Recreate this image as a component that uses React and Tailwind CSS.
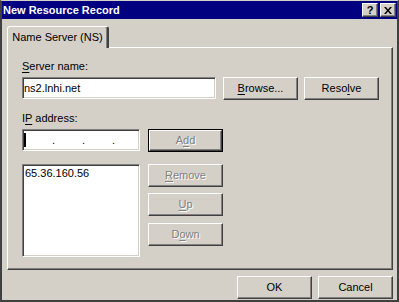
import clsx from "clsx";

const raised =
  "border border-t-white border-l-white border-r-[#404040] border-b-[#404040] shadow-[inset_-1px_-1px_0_#808080] bg-[#d4d0c8]";
const sunken =
  "border border-t-[#808080] border-l-[#808080] border-r-white border-b-white shadow-[inset_1px_1px_0_#404040,inset_-1px_-1px_0_#d4d0c8] bg-white";

const Key = ({ children }) => <span className="underline underline-offset-[2px]">{children}</span>;

const Btn = ({ children, disabled, isDefault, className }) => {
  const face = (
    <div
      className={clsx(
        "flex h-full w-full items-center justify-center",
        raised,
        disabled ? "text-[#808080] [text-shadow:1px_1px_0_#ffffff]" : "text-black"
      )}
    >
      {children}
    </div>
  );
  return (
    <button type="button" className={clsx("shrink-0", isDefault && "border border-black", className)}>
      {face}
    </button>
  );
};

const TitleButton = ({ children }) => (
  <div className={clsx("flex h-[14px] w-[16px] items-center justify-center", raised)}>{children}</div>
);

const App = () => {
  return (
    <div className="flex h-[302px] w-[399px] flex-col overflow-hidden border-b-2 border-l-2 border-r-2 border-t border-[#404040] border-t-[#d4d0c8] bg-[#d4d0c8] text-[11px] leading-[13px] text-black [font-family:'Liberation_Sans',Arial,sans-serif]">
      {/* title bar */}
      <div className="flex h-[18px] items-center bg-[#000080] pl-[1px] pr-[1px]">
        <div className="flex-1 font-bold text-white">New Resource Record</div>
        <div className="flex gap-[2px]">
          <TitleButton>
            <span className="mt-[1px] text-[11px] font-bold leading-none">?</span>
          </TitleButton>
          <TitleButton>
            <svg width="8" height="7" viewBox="0 0 8 7">
              <path d="M0 0h2l2 2.4L6 0h2L5 3.5 8 7H6L4 4.6 2 7H0l3-3.5z" fill="#000" />
            </svg>
          </TitleButton>
        </div>
      </div>

      {/* tab strip */}
      <div className="mt-[7px] flex pl-[5px]">
        <div className="relative z-10 flex h-[22px] w-[102px] items-center justify-center rounded-t-[3px] border-l border-t border-l-white border-t-white border-r-2 border-r-[#404040] bg-[#d4d0c8] shadow-[inset_-1px_0_0_#808080]">
          Name Server (NS)
        </div>
      </div>

      {/* tab panel */}
      <div className={clsx("ml-[5px] -mt-px flex h-[223px] w-[386px] flex-col pl-[14px] pt-[12px]", raised)}>
        <div>
          <Key>S</Key>erver name:
        </div>
        <div className="mt-[4px] flex items-start">
          <div className={clsx("flex h-[22px] w-[194px] items-center pl-[1px]", sunken)}>ns2.lnhi.net</div>
          <Btn className="ml-[7px] h-[23px] w-[75px]">
            <span>
              <Key>B</Key>rowse...
            </span>
          </Btn>
          <Btn className="ml-[6px] h-[23px] w-[75px]">
            <span>
              Reso<Key>l</Key>ve
            </span>
          </Btn>
        </div>

        <div className="mt-[12px]">
          I<Key>P</Key> address:
        </div>
        <div className="mt-[4px] flex items-start">
          <div className={clsx("flex h-[22px] w-[118px] items-center pl-[1px]", sunken)}>
            <div className="flex w-[28px] items-center">
              <div className="h-[14px] w-[2px] bg-black" />
            </div>
            <span className="w-[2px]">.</span>
            <div className="w-[28px]" />
            <span className="w-[2px]">.</span>
            <div className="w-[28px]" />
            <span className="w-[2px]">.</span>
            <div className="flex-1" />
          </div>
          <Btn isDefault disabled className="ml-[8px] h-[23px] w-[75px]">
            <span>
              A<Key>d</Key>d
            </span>
          </Btn>
        </div>

        <div className="mt-[12px] flex items-start">
          <div className={clsx("h-[93px] w-[118px] pl-[2px] pt-[2px]", sunken)}>65.36.160.56</div>
          <div className="ml-[8px] flex flex-col">
            <Btn disabled className="h-[23px] w-[75px]">
              <span>
                <Key>R</Key>emove
              </span>
            </Btn>
            <Btn disabled className="mt-[6px] h-[23px] w-[75px]">
              <span>
                <Key>U</Key>p
              </span>
            </Btn>
            <Btn disabled className="mt-[7px] h-[23px] w-[75px]">
              <span>
                D<Key>o</Key>wn
              </span>
            </Btn>
          </div>
        </div>
      </div>

      {/* footer */}
      <div className="mt-[6px] flex justify-end pr-[4px]">
        <Btn className="h-[23px] w-[75px]">OK</Btn>
        <Btn className="ml-[6px] h-[23px] w-[75px]">Cancel</Btn>
      </div>
    </div>
  );
};

export default App;
